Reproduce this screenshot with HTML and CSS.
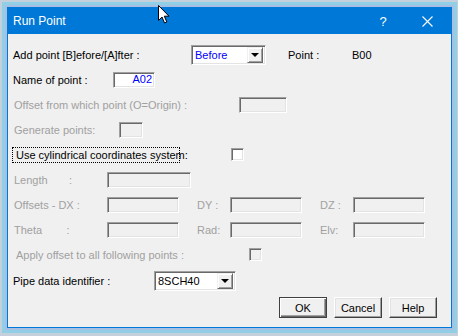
FILE: index.html
```html
<!DOCTYPE html>
<html>
<head>
    <title>Run Point</title>
    <link rel="stylesheet" href="styles.css">
</head>
<body>
    <div class="screen">
        <div class="window">
            <div class="titlebar">
                <span class="title">Run Point</span>
                <span class="help-btn">?</span>
                <span class="close-btn">
                    <svg width="11" height="11" viewBox="0 0 11 11"><path d="M0.5 0.5 L10.5 10.5 M10.5 0.5 L0.5 10.5" stroke="#fff" stroke-width="1.1" fill="none"/></svg>
                </span>
            </div>

            <div class="dialog">
                <div class="row">
                    <span class="label w-add">Add point [B]efore/[A]fter :</span>
                    <div class="combo combo-before">
                        <span class="combo-text blue">Before</span>
                        <span class="combo-arrow"><i></i></span>
                    </div>
                    <span class="label w-point">Point :</span>
                    <span class="label">B00</span>
                </div>

                <div class="row">
                    <span class="label w-name">Name of point :</span>
                    <div class="field field-name blue">A02</div>
                </div>

                <div class="row">
                    <span class="label off w-offset">Offset from which point (O=Origin) :</span>
                    <div class="field off field-offset"></div>
                </div>

                <div class="row">
                    <span class="label off w-gen">Generate points:</span>
                    <div class="field off field-gen"></div>
                </div>

                <div class="row">
                    <span class="label focus">Use cylindrical coordinates system:</span>
                    <span class="check check-cyl"></span>
                </div>

                <div class="row">
                    <span class="label off w-coord">Length       :</span>
                    <div class="field off field-length"></div>
                </div>

                <div class="row">
                    <span class="label off w-coord">Offsets - DX :</span>
                    <div class="field off field-xyz"></div>
                    <span class="label off w-sub">DY :</span>
                    <div class="field off field-xyz"></div>
                    <span class="label off w-sub">DZ :</span>
                    <div class="field off field-xyz"></div>
                </div>

                <div class="row">
                    <span class="label off w-coord">Theta        :</span>
                    <div class="field off field-xyz"></div>
                    <span class="label off w-sub">Rad:</span>
                    <div class="field off field-xyz"></div>
                    <span class="label off w-sub">Elv:</span>
                    <div class="field off field-xyz"></div>
                </div>

                <div class="row">
                    <span class="label off w-apply">Apply offset to all following points :</span>
                    <span class="check off"></span>
                </div>

                <div class="row row-pipe">
                    <span class="label w-pipe">Pipe data identifier :</span>
                    <div class="combo combo-pipe">
                        <span class="combo-text">8SCH40</span>
                        <span class="combo-arrow"><i></i></span>
                    </div>
                </div>

                <div class="row row-buttons">
                    <button class="btn default">OK</button>
                    <button class="btn">Cancel</button>
                    <button class="btn">Help</button>
                </div>
            </div>
        </div>

        <svg class="cursor" width="13" height="20" viewBox="0 0 13 20">
            <path d="M0.5 0.5 L0.5 15.5 L4 12 L6.5 18 L8.8 17 L6.3 11.2 L11 11.2 Z" fill="#fff" stroke="#000" stroke-width="1"/>
        </svg>
    </div>
</body>
</html>
```

FILE: styles.css
```css
body {
    margin: 0;
    background: #c4d0dc;
    font-family: "Liberation Sans", Arial, sans-serif;
    font-size: 11px;
    color: #000;
}

.screen {
    position: relative;
    width: 458px;
    height: 336px;
    box-sizing: border-box;
    padding: 2px 0 0 2px;
}

.window {
    width: 445px;
    height: 321px;
    box-sizing: border-box;
    border: 1px solid #0078d7;
    background: #f0f0f0;
    box-shadow: 0 0 0 2px #a6bfe2, 0 0 0 5px #90cfe5;
    margin: 5px 0 0 5px;
}

.titlebar {
    height: 26px;
    background: #0078d7;
    color: #fff;
    display: flex;
    align-items: center;
    padding-left: 5px;
}

.title {
    font-size: 12px;
    flex: 1;
}

.help-btn {
    font-size: 13px;
    width: 14px;
    text-align: center;
    margin-right: 32px;
}

.close-btn {
    display: flex;
    width: 11px;
    margin-right: 18px;
}

.dialog {
    padding: 8px 0 0 5px;
}

.row {
    height: 25px;
    display: flex;
    align-items: center;
}

.row-pipe {
    margin-top: 1px;
}

.row-buttons {
    margin-top: 2px;
    justify-content: flex-end;
    gap: 7px;
    padding-right: 14px;
}

.label {
    white-space: pre;
    flex-shrink: 0;
}

.label.off {
    color: #a0a0a0;
}

.blue {
    color: #0000ff;
}

.w-add { width: 178px; }
.w-point { width: 64px; margin-left: 22px; }
.w-name { width: 100px; }
.w-offset { width: 225px; padding-left: 1px; }
.w-gen { width: 105px; padding-left: 1px; }
.w-coord { width: 93px; padding-left: 1px; }
.w-sub { width: 33px; padding-left: 18px; }
.w-apply { width: 233px; padding-left: 3px; }
.w-pipe { width: 141px; }

.field {
    height: 16px;
    box-sizing: border-box;
    background: #fff;
    border: 1px solid;
    border-color: #a0a0a0 #fff #fff #a0a0a0;
    box-shadow: inset 1px 1px #696969, inset -1px -1px #e3e3e3;
    line-height: 13px;
    padding: 0 2px;
}

.field.off {
    background: #f0f0f0;
}

.field-name {
    width: 42px;
    text-align: right;
}

.field-offset { width: 48px; }
.field-gen { width: 24px; }
.field-length { width: 84px; }
.field-xyz { width: 72px; }

.focus {
    margin-left: -1px;
    width: 168px;
    height: 16px;
    box-sizing: border-box;
    border: 1px dotted #000;
    padding-left: 3px;
    line-height: 14px;
}

.check {
    width: 13px;
    height: 13px;
    box-sizing: border-box;
    background: #fff;
    border: 1px solid;
    border-color: #a0a0a0 #fff #fff #a0a0a0;
    box-shadow: inset 1px 1px #696969, inset -1px -1px #e3e3e3;
}

.check.off {
    background: #f0f0f0;
}

.check-cyl {
    margin-left: 51px;
}

.combo {
    height: 20px;
    box-sizing: border-box;
    display: flex;
    align-items: center;
    background: #fff;
    border: 1px solid;
    border-color: #a0a0a0 #fff #fff #a0a0a0;
    box-shadow: inset 1px 1px #696969, inset -1px -1px #e3e3e3;
    padding: 2px;
}

.combo-before { width: 75px; }
.combo-pipe { width: 82px; }

.combo-text {
    flex: 1;
    padding-left: 1px;
    font-size: 11px;
}

.combo-arrow {
    width: 16px;
    height: 16px;
    box-sizing: border-box;
    background: #f0f0f0;
    border: 1px solid;
    border-color: #f0f0f0 #696969 #696969 #f0f0f0;
    box-shadow: inset 1px 1px #fff, inset -1px -1px #a0a0a0;
    display: flex;
    align-items: center;
    justify-content: center;
}

.combo-arrow i {
    width: 0;
    height: 0;
    border-left: 4px solid transparent;
    border-right: 4px solid transparent;
    border-top: 4px solid #000;
    margin-top: 1px;
}

.btn {
    width: 48px;
    height: 21px;
    box-sizing: border-box;
    margin: 0;
    padding: 0;
    font-family: "Liberation Sans", Arial, sans-serif;
    font-size: 11px;
    color: #000;
    background: #f0f0f0;
    border: 1px solid;
    border-color: #fff #404040 #404040 #fff;
    box-shadow: inset -1px -1px #a0a0a0, inset 1px 1px #e3e3e3;
}

.btn.default {
    border-color: #404040;
    box-shadow: inset 1px 1px #fff, inset -1px -1px #696969, inset -2px -2px #a0a0a0;
}

.cursor {
    position: absolute;
    left: 158px;
    top: 5px;
}
```
